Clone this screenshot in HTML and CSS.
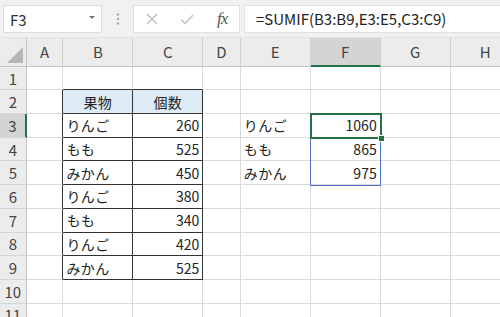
FILE: index.html
```html
<!DOCTYPE html>
<html lang="ja">
<head>
    <meta charset="UTF-8">
    <title>SUMIF</title>
    <link rel="stylesheet" href="styles.css">
</head>
<body>
    <div class="toolbar">
        <div class="namebox">
            <span>F3</span>
            <span class="drop"></span>
        </div>
        <div class="dots">
            <svg width="4" height="12" viewBox="0 0 4 12"><circle cx="2" cy="1.5" r="1.2"/><circle cx="2" cy="6" r="1.2"/><circle cx="2" cy="10.5" r="1.2"/></svg>
        </div>
        <div class="fxbox">
            <svg class="ico" width="14" height="14" viewBox="0 0 14 14"><path d="M2 2 L12 12 M12 2 L2 12" /></svg>
            <svg class="ico" width="16" height="14" viewBox="0 0 16 14"><path d="M2 7.5 L6 11.5 L14 3" /></svg>
            <span class="fx">fx</span>
        </div>
        <div class="formula">=SUMIF(B3:B9,E3:E5,C3:C9)</div>
    </div>

    <div class="sheet">
        <div class="h corner"><span class="tri"></span></div>
        <div class="h">A</div><div class="h">B</div><div class="h">C</div><div class="h">D</div>
        <div class="h">E</div><div class="h sel">F</div><div class="h">G</div><div class="h">H</div>

        <div class="r">1</div>
        <div class="c"></div><div class="c tt"></div><div class="c tt"></div><div class="c"></div>
        <div class="c"></div><div class="c"></div><div class="c"></div><div class="c"></div>

        <div class="r">2</div>
        <div class="c tl"></div><div class="c t head">果物</div><div class="c t head">個数</div><div class="c"></div>
        <div class="c"></div><div class="c"></div><div class="c"></div><div class="c"></div>

        <div class="r sel">3</div>
        <div class="c tl"></div><div class="c t">りんご</div><div class="c t num">260</div><div class="c"></div>
        <div class="c">りんご</div>
        <div class="c num active">1060<span class="range"></span><span class="cursor"></span><span class="handle"></span></div>
        <div class="c"></div><div class="c"></div>

        <div class="r">4</div>
        <div class="c tl"></div><div class="c t">もも</div><div class="c t num">525</div><div class="c"></div>
        <div class="c">もも</div><div class="c num">865</div><div class="c"></div><div class="c"></div>

        <div class="r">5</div>
        <div class="c tl"></div><div class="c t">みかん</div><div class="c t num">450</div><div class="c"></div>
        <div class="c">みかん</div><div class="c num">975</div><div class="c"></div><div class="c"></div>

        <div class="r">6</div>
        <div class="c tl"></div><div class="c t">りんご</div><div class="c t num">380</div><div class="c"></div>
        <div class="c"></div><div class="c"></div><div class="c"></div><div class="c"></div>

        <div class="r">7</div>
        <div class="c tl"></div><div class="c t">もも</div><div class="c t num">340</div><div class="c"></div>
        <div class="c"></div><div class="c"></div><div class="c"></div><div class="c"></div>

        <div class="r">8</div>
        <div class="c tl"></div><div class="c t">りんご</div><div class="c t num">420</div><div class="c"></div>
        <div class="c"></div><div class="c"></div><div class="c"></div><div class="c"></div>

        <div class="r">9</div>
        <div class="c tl"></div><div class="c t">みかん</div><div class="c t num">525</div><div class="c"></div>
        <div class="c"></div><div class="c"></div><div class="c"></div><div class="c"></div>

        <div class="r">10</div>
        <div class="c"></div><div class="c"></div><div class="c"></div><div class="c"></div>
        <div class="c"></div><div class="c"></div><div class="c"></div><div class="c"></div>

        <div class="r">11</div>
        <div class="c"></div><div class="c"></div><div class="c"></div><div class="c"></div>
        <div class="c"></div><div class="c"></div><div class="c"></div><div class="c"></div>
    </div>
</body>
</html>
```

FILE: styles.css
```css
*{
    margin: 0;
    box-sizing: border-box;
}
body{
    width: 500px;
    height: 317px;
    overflow: hidden;
    background-color: #fff;
    font-family: "Noto Sans CJK JP", "Noto Sans", sans-serif;
    color: #222;
}

/* formula bar */
.toolbar{
    display: flex;
    align-items: flex-start;
    height: 38px;
    padding: 5px 0 0 3px;
    background-color: #f1f1f1;
    border-bottom: 1px solid #e2e2e2;
}
.namebox{
    display: flex;
    align-items: center;
    justify-content: space-between;
    width: 99px;
    height: 28px;
    padding: 0 6px 0 6px;
    background-color: #fff;
    border: 1px solid #dcdcdc;
    font-size: 15px;
    color: #333;
}
.drop{
    width: 0;
    height: 0;
    border-left: 3px solid transparent;
    border-right: 3px solid transparent;
    border-top: 3px solid #777;
    margin-top: -4px;
}
.dots{
    width: 31px;
    height: 28px;
    display: flex;
    align-items: center;
    justify-content: center;
    fill: #a8a8a8;
}
.fxbox{
    display: flex;
    align-items: center;
    width: 107px;
    height: 28px;
    padding-left: 11px;
    gap: 20px;
    background-color: #fff;
    border: 1px solid #e0e0e0;
}
.ico{
    fill: none;
    stroke: #c4c4c4;
    stroke-width: 1.6;
}
.fx{
    font-family: "Liberation Serif", serif;
    font-style: italic;
    font-size: 17px;
    color: #555;
    margin-left: 2px;
    letter-spacing: -1px;
}
.formula{
    flex: 1;
    height: 28px;
    margin-left: 4px;
    padding-left: 11px;
    line-height: 26px;
    background-color: #fff;
    border: 1px solid #e0e0e0;
    border-right: 0;
    font-size: 15px;
    color: #222;
}

/* grid */
.sheet{
    display: grid;
    grid-template-columns: 26.7px 36.7px 70px 70px 37.3px 70px 70px 70px 70px;
    grid-template-rows: 28.7px repeat(11, 23.7px);
    font-size: 14px;
}
.h{
    display: flex;
    align-items: center;
    justify-content: center;
    background-color: #ececec;
    border-right: 1px solid #cfcfcf;
    border-bottom: 1px solid #c4c4c4;
    color: #444;
    font-size: 15px;
}
.h.sel{
    background-color: #d4d4d4;
    border-bottom: 2px solid #217346;
}
.corner{
    position: relative;
    border-right-color: #c4c4c4;
}
.tri{
    position: absolute;
    right: 3px;
    bottom: 3px;
    width: 0;
    height: 0;
    border-left: 16px solid transparent;
    border-bottom: 16px solid #b6b6b6;
}
.r{
    display: flex;
    align-items: center;
    justify-content: center;
    background-color: #ececec;
    border-right: 1px solid #c4c4c4;
    border-bottom: 1px solid #d6d6d6;
    color: #444;
    font-size: 15px;
}
.r.sel{
    background-color: #d4d4d4;
    border-right: 2px solid #217346;
}
.c{
    display: flex;
    align-items: center;
    padding: 0 3px;
    border-right: 1px solid #dadada;
    border-bottom: 1px solid #dadada;
    white-space: nowrap;
    letter-spacing: 0.5px;
}
.num{
    justify-content: flex-end;
    letter-spacing: 0;
}
.t{
    border-color: #333;
}
.tl{
    border-right-color: #333;
}
.tt{
    border-bottom-color: #333;
}
.head{
    justify-content: center;
    background-color: #ddebf7;
}

/* selection */
.active{
    position: relative;
}
.range{
    position: absolute;
    left: -1px;
    right: -1px;
    top: -1px;
    height: 73px;
    border: 1px solid #4a72c0;
}
.cursor{
    position: absolute;
    left: -1px;
    right: -2px;
    top: -1px;
    bottom: -2px;
    border: 2px solid #217346;
}
.handle{
    position: absolute;
    right: -5px;
    bottom: -5px;
    width: 7px;
    height: 7px;
    background-color: #217346;
    border: 1px solid #fff;
}
```
